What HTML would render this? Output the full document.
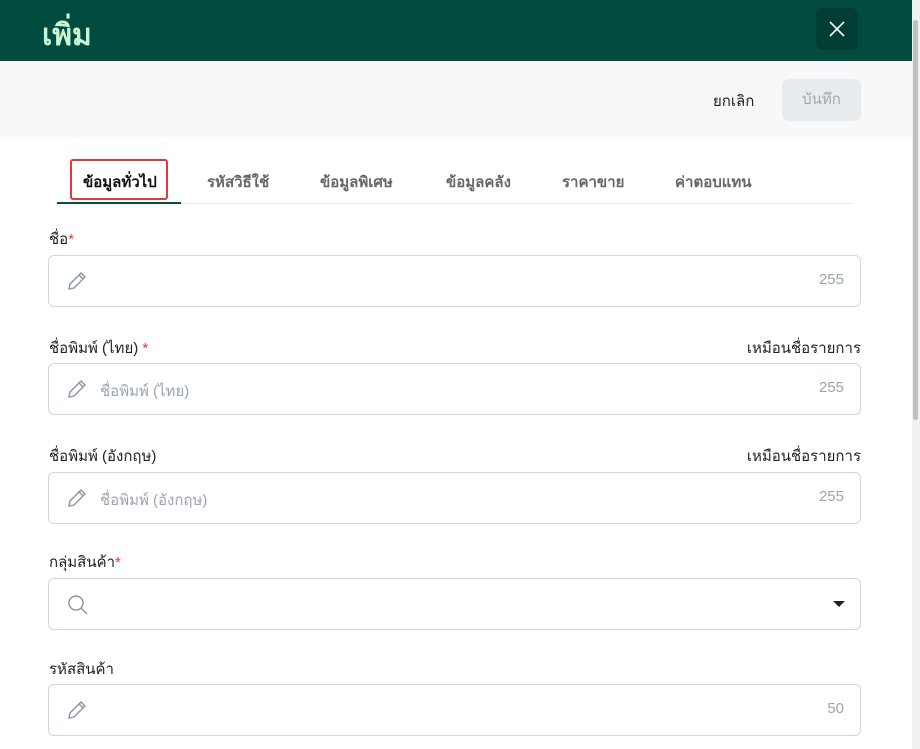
<!DOCTYPE html><html><head><meta charset="utf-8"><style>
body{margin:0;width:920px;height:749px;overflow:hidden;background:#fff;font-family:"Liberation Sans","Noto Sans CJK SC",sans-serif;position:relative}
.hd{position:absolute;left:0;top:0;width:912px;height:61px;background:#024c3f}
.t{position:absolute;left:42px;top:12px;font-size:30px;font-weight:bold;color:#c9f6d2}
.x{position:absolute;left:816px;top:8px;width:42px;height:42px;border-radius:7px;background:#013d32}
.tb{position:absolute;left:0;top:61px;width:912px;height:76px;background:#f7f8fa}
.c{position:absolute;left:713px;top:28px;font-size:15px;color:#222}
.s{position:absolute;left:782px;top:18px;width:79px;height:42px;border-radius:7px;background:#e9ecef;color:#a0a8b2;font-size:15px;text-align:center;line-height:42px}
.tab{position:absolute;top:170px;font-size:15px;color:#666;font-weight:bold}
.ul{position:absolute;left:57px;top:203px;width:796px;height:1px;background:#e5e7eb}
.ula{position:absolute;left:57px;top:202px;width:124px;height:2px;background:#0e4d3d}
.rb{position:absolute;left:70px;top:159px;width:94px;height:37px;border:2px solid #e03a3a;border-radius:3px}
.lb{position:absolute;left:49px;font-size:15px;color:#222}
.lb i{color:#e53935;font-style:normal}
.rl{position:absolute;right:59px;font-size:15px;color:#222}
.in{position:absolute;left:48px;width:811px;height:50px;border:1px solid #cfd6e0;border-radius:6px}
.in svg{position:absolute;left:17px;top:14px}
.ph{position:absolute;left:51px;top:15px;font-size:15px;color:#9aa4b2}
.n{position:absolute;right:16px;top:15px;font-size:15px;color:#9aa4b2}
.sb{position:absolute;left:912px;top:0;width:8px;height:749px;background:#f1f1f1}
.th{position:absolute;left:913px;top:20px;width:5px;height:400px;background:#c1c1c1;border-radius:3px}
</style></head><body>
<div class="hd"><div class="t">เพิ่ม</div><div class="x"><svg width="42" height="42"><path d="M14 14L28 28M28 14L14 28" stroke="#fff" stroke-width="1.6"/></svg></div></div>
<div class="tb"><div class="c">ยกเลิก</div><div class="s">บันทึก</div></div>
<div class="tab" style="left:83px;color:#111">ข้อมูลทั่วไป</div>
<div class="tab" style="left:207px">รหัสวิธีใช้</div>
<div class="tab" style="left:320px">ข้อมูลพิเศษ</div>
<div class="tab" style="left:446px">ข้อมูลคลัง</div>
<div class="tab" style="left:562px">ราคาขาย</div>
<div class="tab" style="left:675px">ค่าตอบแทน</div>
<div class="ul"></div><div class="ula"></div><div class="rb"></div>
<div class="lb" style="top:227px">ชื่อ<i>*</i></div>
<div class="in" style="top:255px"><svg width="22" height="22" viewBox="0 0 22 22"><path d="M3 19l1-5L15 3l4 4L8 18z M13 5l4 4" fill="none" stroke="#8a94a6" stroke-width="1.4"/></svg><span class="n">255</span></div>
<div class="lb" style="top:336px">ชื่อพิมพ์ (ไทย) <i>*</i></div><div class="rl" style="top:336px">เหมือนชื่อรายการ</div>
<div class="in" style="top:363px"><svg width="22" height="22" viewBox="0 0 22 22"><path d="M3 19l1-5L15 3l4 4L8 18z M13 5l4 4" fill="none" stroke="#8a94a6" stroke-width="1.4"/></svg><span class="ph">ชื่อพิมพ์ (ไทย)</span><span class="n">255</span></div>
<div class="lb" style="top:444px">ชื่อพิมพ์ (อังกฤษ)</div><div class="rl" style="top:444px">เหมือนชื่อรายการ</div>
<div class="in" style="top:472px"><svg width="22" height="22" viewBox="0 0 22 22"><path d="M3 19l1-5L15 3l4 4L8 18z M13 5l4 4" fill="none" stroke="#8a94a6" stroke-width="1.4"/></svg><span class="ph">ชื่อพิมพ์ (อังกฤษ)</span><span class="n">255</span></div>
<div class="lb" style="top:550px">กลุ่มสินค้า<i>*</i></div>
<div class="in" style="top:578px"><svg width="24" height="24" viewBox="0 0 24 24"><circle cx="10" cy="10" r="7" fill="none" stroke="#8a94a6" stroke-width="1.4"/><path d="M15 15l6 6" stroke="#8a94a6" stroke-width="1.4"/></svg><svg style="left:784px;top:21px" width="12" height="8"><path d="M0 1h12L6 7z" fill="#222"/></svg></div>
<div class="lb" style="top:657px">รหัสสินค้า</div>
<div class="in" style="top:684px"><svg width="22" height="22" viewBox="0 0 22 22"><path d="M3 19l1-5L15 3l4 4L8 18z M13 5l4 4" fill="none" stroke="#8a94a6" stroke-width="1.4"/></svg><span class="n">50</span></div>
<div class="sb"></div><div class="th"></div>
</body></html>
